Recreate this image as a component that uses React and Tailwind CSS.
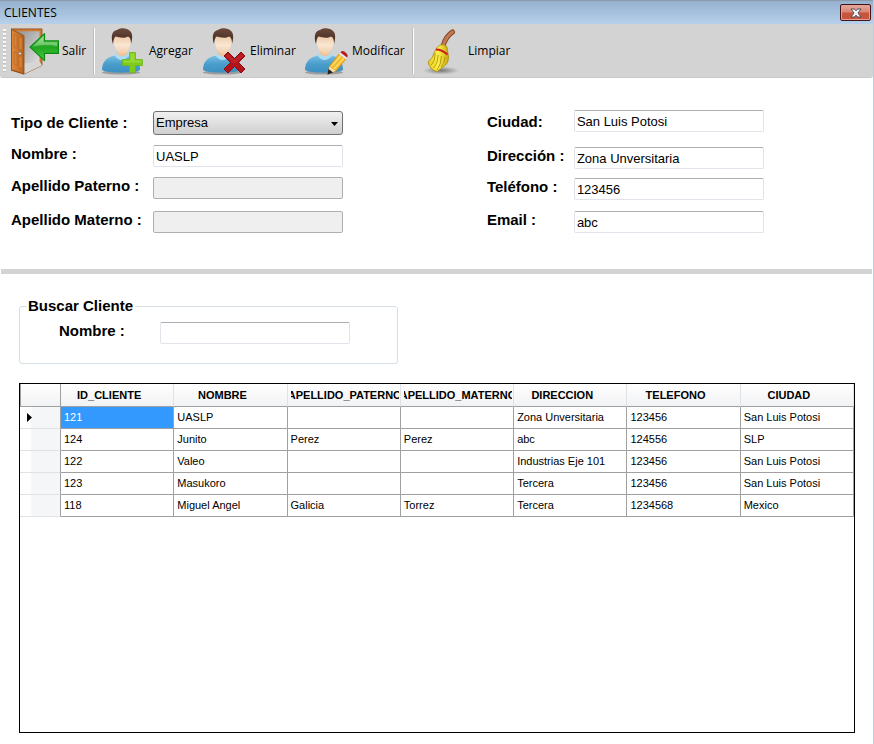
import React from "react";

const UI = "font-['Open_Sans','Noto_Sans',sans-serif]";

function DoorIcon() {
  return (
    <svg width="48" height="48" viewBox="0 0 48 50" preserveAspectRatio="none" className="shrink-0" aria-hidden="true">
      <defs>
        <linearGradient id="leaf" x1="0" x2="1"><stop offset="0" stopColor="#e08a3c" /><stop offset="1" stopColor="#b8601c" /></linearGradient>
        <linearGradient id="room" x1="0" x2="1" y2="1"><stop offset="0" stopColor="#8d8d8d" /><stop offset="1" stopColor="#e6e6e6" /></linearGradient>
        <linearGradient id="arrow" x1="0" x2="0" y1="0" y2="1"><stop offset="0" stopColor="#8fe07a" /><stop offset=".5" stopColor="#1fa51f" /><stop offset="1" stopColor="#4cc944" /></linearGradient>
      </defs>
      <path d="M0 2H31V40L13 49L0 45Z" fill="#d07a32" stroke="#8a4713" strokeWidth=".8" />
      <path d="M3 4.500H28.500V37L13 45Z" fill="url(#room)" />
      <path d="M13 38L28.500 36L31 40L13 49Z" fill="#d6d6d6" />
      <path d="M.5 2.500L13 9V49L.5 44.500Z" fill="url(#leaf)" stroke="#8a4713" strokeWidth=".8" />
      <path d="M3 7.500L6 9V22L3 21ZM8 10L11 11.500V24L8 23ZM3 26L6 27V40L3 39ZM8 30L11 31V43L8 42Z" fill="#d4823a" stroke="#b56320" strokeWidth=".6" />
      <circle cx="9" cy="27.500" r="1.300" fill="#eee" stroke="#666" strokeWidth=".5" />
      <path d="M19 21L33.500 7V14.500H47.500V27.500H33.500V35Z" fill="url(#arrow)" stroke="#0b8a12" strokeWidth="1.200" strokeLinejoin="round" />
      <path d="M21.500 20.500L32.500 10V16H46V20Q34 17 21.500 20.500Z" fill="#fff" opacity=".3" />
    </svg>
  );
}

function PersonIcon({ id, children }) {
  return (
    <svg width="48" height="48" viewBox="-1 0 48 48" className="shrink-0" aria-hidden="true">
      <defs>
        <linearGradient id={id + "b"} x1="0" x2="0" y1="0" y2="1"><stop offset="0" stopColor="#79bfe4" /><stop offset=".5" stopColor="#4a9dcb" /><stop offset="1" stopColor="#3a90c2" /></linearGradient>
        <linearGradient id={id + "f"} x1="0" x2="0" y1="0" y2="1"><stop offset="0" stopColor="#e9bf98" /><stop offset=".6" stopColor="#fae6d2" /><stop offset="1" stopColor="#f0cba8" /></linearGradient>
        <linearGradient id={id + "h"} x1="0" x2="0" y1="0" y2="1"><stop offset="0" stopColor="#6b4a3c" /><stop offset="1" stopColor="#40261d" /></linearGradient>
      </defs>
      <ellipse cx="22" cy="45.500" rx="19" ry="2" fill="#9d9d9d" />
      <path d="M3 43C3 34 8 30.500 16 28.500H30C37 30.500 41 34 41 43C36 46.500 8 46.500 3 43Z" fill={"url(#" + id + "b)"} />
      <path d="M15 28Q22 38 31 28L29 26H17Z" fill="#a9dcf5" />
      <path d="M18 23H28V27Q23 32 18 27Z" fill="#edc39c" />
      <path d="M14.500 12Q14 5 23 5Q32.500 5 32 12C32 19 28.500 27 23.500 27C18 27 14.500 19 14.500 12Z" fill={"url(#" + id + "f)"} />
      <path d="M14 17C11.500 9 13 4 18 3C21 .5 28 .5 31 4C34 6 33.500 12 32 17C32 13 31.500 10.500 29 9.500C25 12 19 10 16.500 9.500C15 11 14.500 13 14 17Z" fill={"url(#" + id + "h)"} />
      {children}
    </svg>
  );
}

function BroomIcon() {
  return (
    <svg width="48" height="48" viewBox="0 0 48 48" className="shrink-0" aria-hidden="true">
      <defs>
        <radialGradient id="shade"><stop offset="0" stopColor="#777" /><stop offset="1" stopColor="#777" stopOpacity="0" /></radialGradient>
        <linearGradient id="straw" x1="0" x2="1"><stop offset="0" stopColor="#e8c91c" /><stop offset=".5" stopColor="#fff04a" /><stop offset="1" stopColor="#c9a90f" /></linearGradient>
      </defs>
      <ellipse cx="24" cy="43.500" rx="18" ry="4" fill="url(#shade)" />
      <path d="M35.500 5Q29 9 26 19" fill="none" stroke="#8a4a2a" strokeWidth="5" strokeLinecap="round" />
      <path d="M35.500 5Q29 9 26 19" fill="none" stroke="#c07a50" strokeWidth="3" strokeLinecap="round" />
      <path d="M23 18Q27 16.500 30 20L31.500 30Q31.500 37 26 40L20 44.500Q13 43 11 35Q16 31 17.500 25Q19 20 23 18Z" fill="url(#straw)" stroke="#a58a0a" strokeWidth=".8" />
      <path d="M18 26Q18 35 14 38M21 28Q21 36 16.500 41M24.500 29Q24 38 20 43M28 30Q28 36 24 40" fill="none" stroke="#b59a10" strokeWidth="1" />
      <path d="M19 22.500Q25 22.500 30.500 27.500" fill="none" stroke="#c8201c" strokeWidth="2" />
    </svg>
  );
}

function ToolButton({ icon, label, className }) {
  return (
    <button type="button" className={"flex h-12 shrink-0 items-center gap-[3px] whitespace-nowrap text-left " + className}>
      {icon}
      <span>{label}</span>
    </button>
  );
}

function Separator() {
  return <div className="mr-[3px] h-[46px] w-[2px] shrink-0 border-l border-[#bdbdbd] bg-white" />;
}

function Field({ id, label, value, disabled, leading = "leading-[18px]" }) {
  return (
    <>
      <label htmlFor={id} className={"text-[15px] font-bold whitespace-nowrap " + leading}>{label}</label>
      <input
        id={id}
        type="text"
        defaultValue={value}
        disabled={disabled}
        className="h-[22px] w-[190px] rounded-[2px] border border-[#e2e3ea] border-t-[#abadb3] bg-white px-[2px] text-[13px] disabled:border-[#afafaf] disabled:bg-[#efefef]"
      />
    </>
  );
}

const columns = ["ID_CLIENTE", "NOMBRE", "APELLIDO_PATERNO", "APELLIDO_MATERNO", "DIRECCION", "TELEFONO", "CIUDAD"];
const rows = [
  ["121", "UASLP", "", "", "Zona Unversitaria", "123456", "San Luis Potosi"],
  ["124", "Junito", "Perez", "Perez", "abc", "124556", "SLP"],
  ["122", "Valeo", "", "", "Industrias Eje 101", "123456", "San Luis Potosi"],
  ["123", "Masukoro", "", "", "Tercera", "123456", "San Luis Potosi"],
  ["118", "Miguel Angel", "Galicia", "Torrez", "Tercera", "1234568", "Mexico"],
];

export default function App() {
  return (
    <div className="flex min-h-screen flex-col border-r border-[#b9cde3] bg-white font-['Liberation_Sans',Arial,sans-serif] text-black">
      <header className={"flex h-6 items-center justify-between border-t border-[#8c9bab] bg-linear-to-b from-[#96b2cf] to-[#b7d0eb] pr-[2px] pl-1 " + UI}>
        <h1 className="text-[12px] leading-4">CLIENTES</h1>
        <button type="button" aria-label="Cerrar" className="flex h-[17px] w-[31px] items-center justify-center rounded-[2px] border border-[#45151c] bg-[#e0a093] p-px">
          <span className="flex h-full w-full items-center justify-center bg-linear-to-b from-[#e3a598] from-0% via-[#d98572] via-45% to-[#c9543c] to-55%">
            <svg width="12" height="10" viewBox="0 0 12 10" className="shrink-0" aria-hidden="true">
              <path d="M1 1H4.500L6 2.800L7.500 1H11L8 5L11 9H7.500L6 7.200L4.500 9H1L4 5Z" fill="#f4f4f4" stroke="#4c5160" strokeWidth="1" />
            </svg>
          </span>
        </button>
      </header>

      <nav className={"flex h-[54px] items-center overflow-hidden rounded-b-[3px] border-b border-[#c8c8c8] bg-[#d3d3d3] pl-[3px] text-[12px] " + UI}>
        <div className="mr-[5px] h-[43px] w-[3px] shrink-0 bg-[repeating-linear-gradient(to_bottom,#f8f8f8_0_2px,#c0c0c0_2px_3px,#d3d3d3_3px_4px)]" />
        <ToolButton label="Salir" className="w-[82px]" icon={<DoorIcon />} />
        <Separator />
        <ToolButton
          label="Agregar"
          className="w-[101px]"
          icon={
            <PersonIcon id="add">
              <path d="M30.500 25.500H36.500V32.500H43.500V38.500H36.500V45.500H30.500V38.500H23.500V32.500H30.500Z" fill="#7ecb1e" stroke="#6cb51a" strokeWidth=".8" />
              <path d="M31.500 26.500H35.500V33.500H42.500V35.500H24.500V33.500H31.500Z" fill="#a4e03c" opacity=".7" />
            </PersonIcon>
          }
        />
        <ToolButton
          label="Eliminar"
          className="w-[102px]"
          icon={
            <PersonIcon id="del">
              <path d="M28 25L34.500 31.500L41 25L45 29L38.500 35.500L45 42L41 46L34.500 39.500L28 46L24 42L30.500 35.500L24 29Z" fill="#b0151a" stroke="#8d0c12" strokeWidth="1" strokeLinejoin="round" />
              <path d="M28 26.500L34.500 33L41 26.500L43.500 29L36 36H33L25.500 29Z" fill="#d8323a" opacity=".4" />
            </PersonIcon>
          }
        />
        <ToolButton
          label="Modificar"
          className="w-[111px]"
          icon={
            <PersonIcon id="mod">
              <path d="M26 47L27.500 39L37 27L44 32L34 44Z" fill="#f5b92c" stroke="#c98c14" strokeWidth=".7" />
              <path d="M29.500 39.500L39 28.500M32 42L42 31" stroke="#ffe07a" strokeWidth="1.200" />
              <path d="M26 47L27.500 39.500L33.500 44Z" fill="#f3dcae" />
              <path d="M25.500 47.500L26.500 42L31 45.500Z" fill="#222" />
              <path d="M37 27L38.500 25.500L45 30L44 32.500Z" fill="#e8e8e8" />
              <path d="M38.500 25.500Q40 23 43 25Q47 28 45 30.500Z" fill="#b81c22" />
            </PersonIcon>
          }
        />
        <Separator />
        <ToolButton label="Limpiar" className="" icon={<BroomIcon />} />
      </nav>

      <main className="flex flex-1 flex-col">
        <form className="grid grid-cols-[11fr_9fr] gap-1 pt-8 pb-9 pl-[11px]">
          <div className="grid grid-cols-[142px_190px] grid-rows-[34px_32px_34px_22px] items-start pt-px">
            <label htmlFor="tipo" className="text-[15px] leading-6 font-bold whitespace-nowrap">Tipo de Cliente :</label>
            <div className="relative">
              <select id="tipo" defaultValue="Empresa" className="block h-6 w-full appearance-none rounded-[3px] border border-[#707070] bg-linear-to-b from-[#f0f0f0] to-[#cfcfcf] px-[2px] text-[13px]">
                <option>Empresa</option>
                <option>Persona</option>
              </select>
              <svg width="7" height="4" viewBox="0 0 7 4" className="pointer-events-none absolute top-[11px] right-[5px]" aria-hidden="true">
                <path d="M0 0H7L3.500 4Z" />
              </svg>
            </div>
            <Field id="nombre" label="Nombre :" value="UASLP" />
            <Field id="paterno" label="Apellido Paterno :" disabled />
            <Field id="materno" label="Apellido Materno :" disabled />
          </div>
          <div className="grid grid-cols-[87px_190px] grid-rows-[37px_31px_33px_22px] items-start">
            <Field id="ciudad" label="Ciudad:" value="San Luis Potosi" leading="leading-6" />
            <Field id="direccion" label="Dirección :" value="Zona Unversitaria" />
            <Field id="telefono" label="Teléfono :" value="123456" />
            <Field id="email" label="Email :" value="abc" />
          </div>
        </form>

        <div className="mx-px h-[5px] bg-[#d3d3d3]" />

        <section className="flex flex-1 flex-col pt-[23px] pr-[18px] pb-[11px] pl-[19px]">
          <fieldset className="h-[67px] w-[379px] rounded-[3px] border border-[#d5dfe5] pl-[6px]">
            <legend className="px-[2px] text-[15px] leading-[18px] font-bold">Buscar Cliente</legend>
            <div className="grid grid-cols-[101px_190px] items-start pt-[7px] pl-[33px]">
              <Field id="buscar" label="Nombre :" value="" />
            </div>
          </fieldset>

          <div className="mt-[19px] flex-1 border border-black">
            <table className="w-full table-fixed border-separate border-spacing-0 text-left text-[11px]">
              <colgroup>
                <col className="w-[41px]" />
                {columns.map((c) => <col key={c} />)}
              </colgroup>
              <thead>
                <tr className="h-[23px]">
                  <th className="border-r border-b border-l border-[#a0a0a0] bg-linear-to-b from-white to-[#f1f2f4] p-0" />
                  {columns.map((c) => (
                    <th key={c} scope="col" className="border-r border-b border-r-[#e0e2e5] border-b-[#a0a0a0] bg-linear-to-b from-white to-[#f1f2f4] py-0 pr-px pl-[3px] font-bold">
                      <div className="flex justify-center overflow-hidden">
                        <span>{c}</span>
                        <span className="w-[18px]" />
                      </div>
                    </th>
                  ))}
                </tr>
              </thead>
              <tbody>
                {rows.map((r, i) => (
                  <tr key={r[0]} className="h-[22px]">
                    <th scope="row" aria-label={"Fila " + (i + 1)} className="border-r border-b border-r-[#a0a0a0] border-b-[#e0e2e5] bg-linear-to-r from-white from-25% to-[#f5f6f8] to-30% p-0 pl-[7px]">
                      {i === 0 && (
                        <svg width="5" height="9" viewBox="0 0 5 9" aria-hidden="true"><path d="M0 0L5 4.500L0 9Z" /></svg>
                      )}
                    </th>
                    {r.map((v, j) => (
                      <td key={j} className={"overflow-hidden border-r border-b border-[#a0a0a0] py-0 pr-0 pl-[3px] whitespace-nowrap " + (i === 0 && j === 0 ? "bg-[#3399ff] text-white" : "")}>
                        {v}
                      </td>
                    ))}
                  </tr>
                ))}
              </tbody>
            </table>
          </div>
        </section>
      </main>
    </div>
  );
}
